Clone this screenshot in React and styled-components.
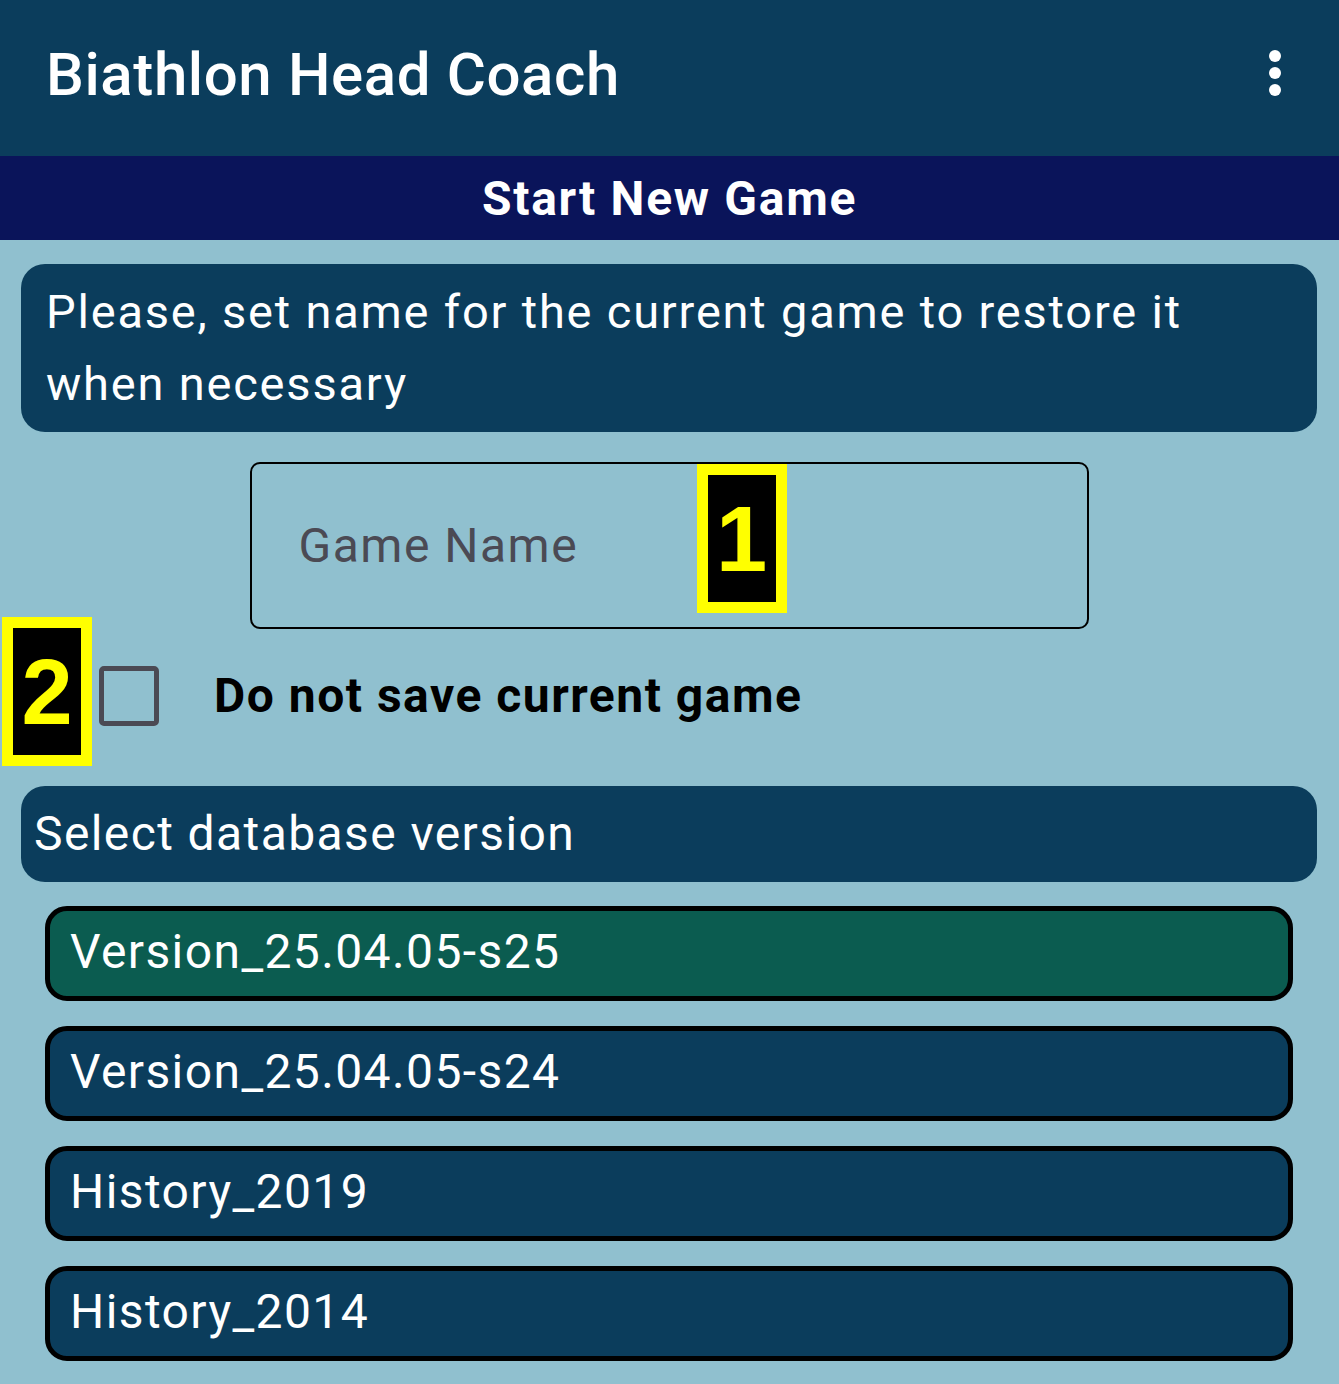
import React from "react";
import styled, { createGlobalStyle } from "styled-components";

const versions = [
    { id: 1, name: "Version_25.04.05-s25", selected: true },
    { id: 2, name: "Version_25.04.05-s24" },
    { id: 3, name: "History_2019" },
    { id: 4, name: "History_2014" },
];

const App = () => {
    return (
        <>
            <GlobalStyle />
            <Screen>
                <AppBar>
                    <Title>Biathlon Head Coach</Title>
                    <MenuButton aria-label="menu">
                        <svg width="24" height="52" viewBox="0 0 24 52">
                            <circle cx="12" cy="9" r="6" fill="#fff" />
                            <circle cx="12" cy="26" r="6" fill="#fff" />
                            <circle cx="12" cy="43" r="6" fill="#fff" />
                        </svg>
                    </MenuButton>
                </AppBar>
                <SubBar>Start New Game</SubBar>
                <Content>
                    <InfoCard>
                        Please, set name for the current game to restore it when necessary
                    </InfoCard>
                    <InputWrap>
                        <NameInput placeholder="Game Name" />
                        <Badge $left="447px" $top="2px">1</Badge>
                    </InputWrap>
                    <CheckRow>
                        <Badge $left="-19px" $top="-12px">2</Badge>
                        <CheckBox />
                        <CheckLabel>Do not save current game</CheckLabel>
                    </CheckRow>
                    <SectionCard>Select database version</SectionCard>
                    <VersionList>
                        {versions.map((v) => (
                            <VersionButton key={v.id} $selected={v.selected}>
                                {v.name}
                            </VersionButton>
                        ))}
                    </VersionList>
                </Content>
            </Screen>
        </>
    );
};

//Styles
const GlobalStyle = createGlobalStyle`
    * {
        box-sizing: border-box;
    }
    body {
        margin: 0;
        font-family: Roboto, "Noto Sans", sans-serif;
        background: #90c0cf;
    }
`;
const Screen = styled.div`
    width: 1339px;
    min-height: 1384px;
    background: #90c0cf;
`;
const AppBar = styled.header`
    height: 156px;
    background: #0b3d5c;
    display: flex;
    align-items: center;
    justify-content: space-between;
    padding: 0 52px 8px 46px;
`;
const Title = styled.h1`
    margin: 0;
    color: #fff;
    font-size: 60px;
    font-weight: 500;
    letter-spacing: 0.6px;
`;
const MenuButton = styled.div`
    display: flex;
    align-items: center;
    margin-bottom: 2px;
`;
const SubBar = styled.div`
    height: 84px;
    background: #0a145a;
    color: #fff;
    display: flex;
    align-items: center;
    justify-content: center;
    font-size: 48px;
    font-weight: 700;
    letter-spacing: 1.7px;
`;
const Content = styled.main`
    padding: 24px 22px 0 21px;
`;
const InfoCard = styled.div`
    background: #0b3d5c;
    color: #fff;
    border-radius: 24px;
    padding: 12px 25px 12px;
    font-size: 47px;
    line-height: 72px;
    letter-spacing: 1.8px;
`;
const InputWrap = styled.div`
    position: relative;
    width: 839px;
    margin: 30px auto 0;
`;
const NameInput = styled.input`
    display: block;
    width: 100%;
    height: 167px;
    background: transparent;
    border: 2px solid #000;
    border-radius: 10px;
    padding: 0 47px;
    font-family: Roboto, sans-serif;
    font-size: 48px;
    letter-spacing: 1.5px;
    color: #222;
    outline: none;
    &::placeholder {
        color: #4b4a54;
    }
`;
const Badge = styled.div`
    position: absolute;
    left: ${(p) => p.$left};
    top: ${(p) => p.$top};
    width: 90px;
    height: 149px;
    background: #000;
    border: 11px solid #ffff00;
    color: #ffff00;
    font-family: "Liberation Sans", Arial, sans-serif;
    font-weight: 700;
    font-size: 92px;
    line-height: 1;
    display: flex;
    align-items: center;
    justify-content: center;
`;
const CheckRow = styled.div`
    position: relative;
    display: flex;
    align-items: center;
    gap: 55px;
    height: 135px;
    padding: 0 0 2px 78px;
`;
const CheckBox = styled.div`
    width: 60px;
    height: 60px;
    border: 5px solid #4b4a54;
    border-radius: 5px;
`;
const CheckLabel = styled.span`
    font-size: 48px;
    font-weight: 700;
    color: #000;
    letter-spacing: 1.5px;
`;
const SectionCard = styled.div`
    margin-top: 22px;
    background: #0b3d5c;
    color: #fff;
    border-radius: 24px;
    height: 96px;
    display: flex;
    align-items: center;
    padding: 0 13px 2px;
    font-size: 48px;
    letter-spacing: 1.4px;
`;
const VersionList = styled.div`
    display: flex;
    flex-direction: column;
    gap: 25px;
    margin: 24px 24px 0 24px;
`;
const VersionButton = styled.div`
    height: 95px;
    border: 5px solid #000;
    border-radius: 22px;
    background: ${(p) => (p.$selected ? "#0b5c50" : "#0b3d5c")};
    color: #fff;
    display: flex;
    align-items: center;
    padding: 0 20px 4px;
    font-size: 48px;
    letter-spacing: 1.4px;
`;

export default App;
